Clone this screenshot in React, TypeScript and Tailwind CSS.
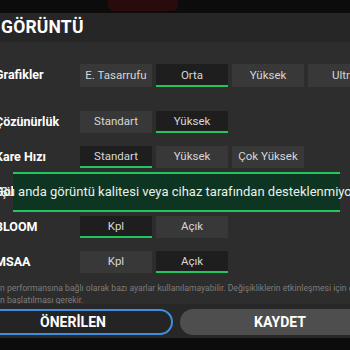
import React from "react";

type Row = { label: string; options: string[]; selected: number };

const rows: (Row & { top: string; h: string })[] = [
  { label: "Grafikler", options: ["E. Tasarrufu", "Orta", "Yüksek", "Ultra"], selected: 1, top: "mt-[22px]", h: "h-[23px]" },
  { label: "Çözünürlük", options: ["Standart", "Yüksek"], selected: 1, top: "mt-[24px]", h: "h-[22px]" },
  { label: "Kare Hızı", options: ["Standart", "Yüksek", "Çok Yüksek"], selected: 0, top: "mt-[13px]", h: "h-[22px]" },
  { label: "Gölgeler", options: ["Düşük", "Orta"], selected: 0, top: "mt-[13px]", h: "h-[22px]" },
  { label: "BLOOM", options: ["Kpl", "Açık"], selected: 0, top: "mt-[13px]", h: "h-[22px]" },
  { label: "MSAA", options: ["Kpl", "Açık"], selected: 1, top: "mt-[13px]", h: "h-[22px]" },
];

function OptionButton({ text, active, h }: { text: string; active: boolean; h: string }) {
  return (
    <div
      className={`relative w-[72px] ${h} flex-shrink-0 flex items-center justify-center text-[11.5px] leading-none text-[#d6d6d6] ${
        active ? "bg-[#1e1e1e]" : "bg-[#383838]"
      }`}
    >
      {text}
      {active && <span className="absolute left-0 right-0 bottom-0 h-[2px] bg-[#22c55e]" />}
    </div>
  );
}

export default function App() {
  return (
    <div className="relative w-[350px] h-[350px] overflow-hidden bg-[#2d2d2d] font-['Roboto',sans-serif]">
      {/* top strip */}
      <div className="relative h-[13px] bg-[#0c0c0c]">
        <div className="absolute left-[108px] top-0 w-[70px] h-[11px] bg-[#2a0b0b] rounded-b-md" />
      </div>

      {/* header */}
      <div className="h-[29px] bg-[#262626] flex items-center pl-[1px]">
        <h1 className="text-[17.5px] font-bold text-white tracking-[0.2px] leading-none">GÖRÜNTÜ</h1>
      </div>

      {/* settings rows */}
      {rows.map(r => (
        <div key={r.label} className={`flex items-center -ml-[5px] ${r.top}`}>
          <div className="w-[85px] flex-shrink-0 text-[12.5px] leading-none font-bold text-white whitespace-nowrap">{r.label}</div>
          <div className="flex gap-[4px]">
            {r.options.map((o, i) => (
              <OptionButton key={o} text={o} active={i === r.selected} h={r.h} />
            ))}
          </div>
        </div>
      ))}

      {/* footer note */}
      <div className="mt-[9px] text-[8.6px] leading-[12px] text-[#7c7c7c] whitespace-nowrap">
        <div>n performansına bağlı olarak bazı ayarlar kullanılamayabilir. Değişikliklerin etkinleşmesi için oyunun</div>
        <div>n başlatılması gerekir.</div>
      </div>

      {/* action buttons */}
      <div className="absolute left-0 right-0 top-[304px] h-[34px] bg-[#272727]">
        <div className="flex gap-[7px] -ml-[27px] mt-[5px]">
          <button className="w-[200px] h-[26px] flex-shrink-0 rounded-full border-2 border-[#3d8fe0] bg-[#242424] text-white font-bold text-[14px]">
            ÖNERİLEN
          </button>
          <button className="w-[200px] h-[26px] flex-shrink-0 rounded-full bg-[#4e4e4e] text-white font-bold text-[14px]">
            KAYDET
          </button>
        </div>
      </div>
      <div className="absolute left-0 right-0 top-[338px] h-[12px] bg-[#0c0c0c]" />

      {/* toast */}
      <div className="absolute left-[13px] top-[172px] w-[327px] h-[40px] bg-[#0e3522] border-y-2 border-[#22c55e]" />
      <div className="absolute left-0 top-[184px] text-[13px] leading-[16px] text-[#e6f2ea] whitespace-nowrap">
        Şu anda görüntü kalitesi veya cihaz tarafından desteklenmiyor
      </div>
    </div>
  );
}
